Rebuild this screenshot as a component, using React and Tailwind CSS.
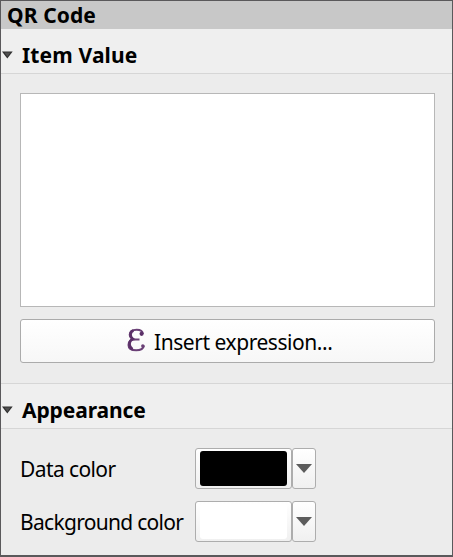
function SectionHeader({ title, className, titleClass }) {
  return (
    <div className={`flex items-center border-[#d6d6d6] bg-[#efefef] pt-2 ${className}`}>
      <svg className="ml-px h-2 w-[11px] shrink-0" viewBox="0 0 11 8" aria-hidden="true">
        <path d="M0 0.5H10.7L5.3 7.6Z" fill="#303030" />
        <path d="M2.4 1.6H8.4L5.4 5.8Z" fill="#505050" />
      </svg>
      <h2 className={`ml-[9px] whitespace-nowrap text-[21px] leading-6 font-bold ${titleClass}`}>{title}</h2>
    </div>
  );
}

function ColorRow({ label, swatch, labelClass }) {
  return (
    <div className="flex h-[41px] items-center">
      <span className={`w-[175px] shrink-0 pt-px whitespace-nowrap text-[21px] leading-6 ${labelClass}`}>{label}</span>
      <button className="h-[41px] w-[97px] rounded-[3px] border border-[#adadad] bg-linear-to-b from-white to-[#f0f0f0] pl-1">
        <span className={`block h-[35px] w-[87px] rounded-[3px] ${swatch}`} />
      </button>
      <button className="flex h-[41px] w-6 items-center justify-center rounded-[3px] border border-[#adadad] bg-linear-to-b from-white to-[#f0f0f0]">
        <svg className="h-[9px] w-4 shrink-0" viewBox="0 0 16 9" aria-hidden="true">
          <path d="M0 0H16L8 9Z" fill="#5c5c5c" />
        </svg>
      </button>
    </div>
  );
}

export default function App() {
  return (
    <main className="flex h-[557px] w-[453px] flex-col overflow-hidden border border-b-2 border-[#5a595b] bg-[#ececec] font-['Noto_Sans',sans-serif] text-black">
      <h1 className="h-7 shrink-0 bg-[#c8c8c8] pl-[6px] text-[21px] leading-[29px] font-bold tracking-[0.1px] whitespace-nowrap">
        QR Code
      </h1>
      <SectionHeader title="Item Value" className="h-[45px] shrink-0 border-b" titleClass="tracking-[0.15px]" />
      <section className="flex h-[309px] shrink-0 flex-col pt-[19px] pr-[17px] pl-[19px]">
        <textarea aria-label="Item value" className="block h-[214px] w-[415px] shrink-0 resize-none border border-[#b7b7b7] bg-white outline-none" />
        <button className="mt-3 flex h-11 w-[415px] shrink-0 items-center rounded-[3px] border border-[#ababab] bg-linear-to-b from-white to-[#f7f7f7] pl-[106px]">
          <svg className="mb-[2px] h-6 w-[18px] shrink-0" viewBox="0 0 18 24" aria-hidden="true">
            <path d="M15.8 6C15.5 2.8 12.8 1.8 9.7 1.8C5.3 1.8 2.7 3.6 2.7 6.8C2.7 9.7 5.2 11.6 8.7 11.6H12.5M8.7 11.6C4 11.6 1.5 13.5 1.5 16.9C1.5 20.6 4.6 22.2 9.2 22.2C13.7 22.2 16.4 20.6 17 17.5" fill="none" stroke="#6a4076" strokeWidth="2" />
            <path d="M6.5 2.5C3 3.8 2.6 8.2 5.6 10.8C1.4 13.3 1.6 18.8 5.6 21.3" fill="none" stroke="#5b3068" strokeWidth="2.6" />
            <circle cx="14.6" cy="5.8" r="2.1" fill="#5b3068" />
            <circle cx="15.8" cy="18" r="1.7" fill="#6a4076" />
          </svg>
          <span className="ml-[9px] pt-[2px] whitespace-nowrap text-[21px] leading-6 tracking-[-0.45px]">Insert expression...</span>
        </button>
      </section>
      <SectionHeader title="Appearance" className="h-[46px] shrink-0 border-y" titleClass="tracking-[-0.1px]" />
      <section className="flex flex-col gap-3 pt-[19px] pl-[19px]">
        <ColorRow label="Data color" swatch="bg-black" labelClass="tracking-[-0.6px]" />
        <ColorRow label="Background color" swatch="bg-white" labelClass="tracking-[-0.7px]" />
      </section>
    </main>
  );
}
